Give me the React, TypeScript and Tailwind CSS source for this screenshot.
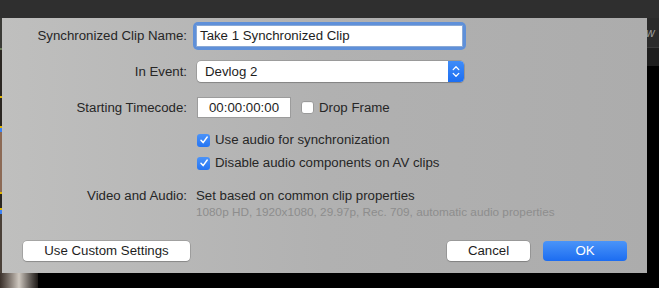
import React from "react";

function Check({ checked }: { checked: boolean }) {
  if (!checked) {
    return (
      <span className="block w-[13px] h-[13px] rounded-[3px] bg-white border border-[#9a9a9a] shadow-[inset_0_1px_0_rgba(0,0,0,0.05)]" />
    );
  }
  return (
    <span className="flex w-[13px] h-[13px] items-center justify-center rounded-[3px] bg-linear-to-b from-[#4b93f8] to-[#2474f3]">
      <svg width="10" height="10" viewBox="0 0 10 10" fill="none">
        <path d="M2 5.3 L4.1 7.6 L8.2 2" stroke="white" strokeWidth="1.5" strokeLinecap="round" strokeLinejoin="round" />
      </svg>
    </span>
  );
}

function Label({ children }: { children: React.ReactNode }) {
  return <span className="w-[185px] shrink-0 text-right">{children}</span>;
}

export default function App() {
  return (
    <div className="w-[659px] h-[288px] bg-black overflow-hidden flex flex-col font-['Liberation_Sans',Arial,sans-serif] text-[13.25px] text-[#262626]">
      <div className="h-[18px] shrink-0 bg-[#2f2f2f]" />

      <div className="flex h-[255px] shrink-0">
        {/* video strip peeking out on the left */}
        <div className="w-[2px] flex flex-col bg-[#2a2622]">
          <div className="h-[30px] bg-[#3a3a36]" />
          <div className="h-[2px] bg-[#6b7a5a]" />
          <div className="h-[46px]" />
          <div className="h-[2px] bg-[#e0b400]" />
          <div className="h-[28px]" />
          <div className="h-[2px] bg-[#e0b400]" />
          <div className="h-[4px] bg-[#3b82f6]" />
          <div className="h-[60px] bg-[#8c6a55]" />
          <div className="h-[2px] bg-[#e0b400]" />
          <div className="h-[14px]" />
          <div className="h-[2px] bg-[#e0b400]" />
          <div className="h-[4px] bg-[#3b82f6]" />
          <div className="flex-1 bg-[#4a4038]" />
        </div>

        {/* dialog */}
        <div className="w-[645px] flex flex-col bg-linear-to-r from-[#bfbfbe] via-[#b1b1b1] to-[#acacac]">
          <div className="flex items-center h-[28px] mt-[4px]">
            <Label>Synchronized Clip Name:</Label>
            <div className="ml-[6px] w-[273px] h-[28px] rounded-[5px] bg-[#5f90d9] p-[3px]">
              <div className="h-full bg-white border border-[#8aa9d6] flex items-center pl-[3px] text-[#1d1d1d]">
                Take 1 Synchronized Clip
              </div>
            </div>
          </div>

          <div className="flex items-center h-[21px] mt-[11px]">
            <Label>In Event:</Label>
            <div className="ml-[10px] w-[267px] h-[21px] rounded-[4px] bg-white shadow-[0_0_0_0.5px_rgba(0,0,0,0.25),0_1px_1px_rgba(0,0,0,0.15)] flex overflow-hidden">
              <span className="flex-1 flex items-center pl-[8px] text-[#1d1d1d]">Devlog 2</span>
              <span className="w-[16px] flex items-center justify-center bg-linear-to-b from-[#3f8cf8] to-[#1c6ef2]">
                <svg width="8" height="13" viewBox="0 0 8 13" fill="none">
                  <path d="M1.2 4.6 L4 1.8 L6.8 4.6" stroke="white" strokeWidth="1.3" strokeLinecap="round" strokeLinejoin="round" />
                  <path d="M1.2 8.4 L4 11.2 L6.8 8.4" stroke="white" strokeWidth="1.3" strokeLinecap="round" strokeLinejoin="round" />
                </svg>
              </span>
            </div>
          </div>

          <div className="flex items-center h-[21px] mt-[15px]">
            <Label>Starting Timecode:</Label>
            <div className="ml-[10px] w-[94px] h-[21px] bg-white border border-[#9c9c9c] flex items-center justify-center text-[#1d1d1d]">
              00:00:00:00
            </div>
            <span className="ml-[10px]">
              <Check checked={false} />
            </span>
            <span className="ml-[5px]">Drop Frame</span>
          </div>

          <div className="flex items-center h-[20px] mt-[12px] pl-[195px]">
            <Check checked />
            <span className="ml-[5px]">Use audio for synchronization</span>
          </div>
          <div className="flex items-center h-[20px] mt-[3px] pl-[195px]">
            <Check checked />
            <span className="ml-[5px]">Disable audio components on AV clips</span>
          </div>

          <div className="flex items-center h-[18px] mt-[14px]">
            <Label>Video and Audio:</Label>
            <span className="ml-[9px]">Set based on common clip properties</span>
          </div>
          <div className="h-[14px] flex items-center pl-[194px] text-[11.75px] text-[#8d8d8d]">
            1080p HD, 1920x1080, 29.97p, Rec. 709, automatic audio properties
          </div>

          <div className="flex items-center h-[20px] mt-[22px] pl-[21px] pr-[20px]">
            <button className="w-[167px] h-[20px] rounded-[4px] bg-white shadow-[0_0_0_0.5px_rgba(0,0,0,0.25),0_1px_1px_rgba(0,0,0,0.15)] text-[#1d1d1d]">
              Use Custom Settings
            </button>
            <div className="flex-1" />
            <button className="w-[83px] h-[20px] rounded-[4px] bg-white shadow-[0_0_0_0.5px_rgba(0,0,0,0.25),0_1px_1px_rgba(0,0,0,0.15)] text-[#1d1d1d]">
              Cancel
            </button>
            <button className="ml-[13px] w-[84px] h-[20px] rounded-[4px] bg-linear-to-b from-[#4a94f8] to-[#1b6cf1] text-white">
              OK
            </button>
          </div>
        </div>

        {/* app chrome on the right */}
        <div className="flex-1 flex flex-col">
          <div className="h-[30px] bg-[#2b2b2b] border-b border-[#3b3b3b] flex items-center overflow-hidden">
            <span className="text-[12px] text-[#9a9a9a] -ml-[1px] italic">w</span>
          </div>
          <div className="h-[18px] bg-[#1e1e1e]" />
          <div className="flex-1 bg-black" />
        </div>
      </div>

      <div className="flex-1 flex">
        <div className="w-[38px] bg-linear-to-r from-[#3a302a] via-[#cfc8c0] to-[#1e1a17]" />
        <div className="flex-1 bg-black" />
      </div>
    </div>
  );
}
